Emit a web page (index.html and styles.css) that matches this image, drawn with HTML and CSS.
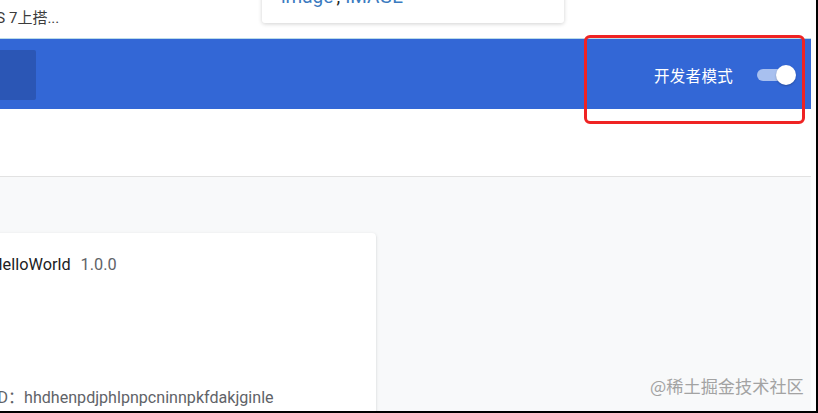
FILE: index.html
```html
<!DOCTYPE html>
<html lang="zh">
<head>
<meta charset="utf-8">
<title>扩展程序</title>
<link rel="stylesheet" href="styles.css">
</head>
<body>
<div class="frame">
  <div class="page">
    <div class="topbar"><span class="crumb">OS 7上搭...</span></div>
    <header class="toolbar">
      <div class="menu-box"></div>
      <div class="dev-mode">
        <span class="dev-label">开发者模式</span>
        <span class="toggle"><span class="knob"></span></span>
      </div>
    </header>
    <div class="subbar"></div>
    <main class="content">
      <section class="card">
        <div class="card-title"><span class="name">HelloWorld</span><span class="version">1.0.0</span></div>
        <div class="card-id">ID：hhdhenpdjphlpnpcninnpkfdakjginle</div>
      </section>
    </main>
  </div>
  <div class="strip"></div>

  <div class="popover"><a class="link">image</a><span class="comma">,</span><a class="link">IMAGE</a></div>
  <div class="highlight"></div>
  <div class="watermark">@稀土掘金技术社区</div>
</div>
</body>
</html>
```

FILE: styles.css
```css
html, body {
  margin: 0;
  padding: 0;
  background: #000;
  width: 818px;
  height: 413px;
  overflow: hidden;
}

.frame {
  position: relative;
  width: 816px;
  height: 411px;
  overflow: hidden;
  background: #fff;
  display: flex;
  font-family: Roboto, "Noto Sans CJK SC", sans-serif;
}

.page {
  width: 811px;
  display: flex;
  flex-direction: column;
}

.strip {
  width: 5px;
  background: #fdfdfd;
}

.topbar {
  height: 38px;
  border-bottom: 1px solid #b9dbe8;
  display: flex;
  align-items: center;
  flex-shrink: 0;
}

.crumb {
  margin-left: -14px;
  font-size: 15px;
  color: #3c3c3c;
  margin-top: -5px;
}

.toolbar {
  height: 70px;
  background: #3367d6;
  display: flex;
  align-items: center;
  justify-content: space-between;
  flex-shrink: 0;
}

.menu-box {
  width: 36px;
  height: 50px;
  background: #2b56b5;
  border-radius: 0 2px 2px 0;
  margin-top: 1px;
}

.dev-mode {
  display: flex;
  align-items: center;
  padding-right: 15px;
  margin-top: 1px;
}

.dev-label {
  font-family: "Noto Sans CJK SC", sans-serif;
  font-size: 15.5px;
  color: #fff;
  margin-right: 24px;
  letter-spacing: 0.3px;
}

.toggle {
  position: relative;
  width: 32px;
  height: 12px;
  border-radius: 6px;
  background: #a8c0ef;
  margin-right: 7px;
}

.knob {
  position: absolute;
  right: -7px;
  top: -4px;
  width: 20px;
  height: 20px;
  border-radius: 50%;
  background: #fff;
  box-shadow: 0 1px 2px rgba(0, 0, 0, 0.25);
}

.subbar {
  height: 67px;
  border-bottom: 1px solid #e2e2e2;
  flex-shrink: 0;
}

.content {
  flex: 1;
  background: #f8f9fa;
  padding-top: 56px;
}

.card {
  margin-left: -24px;
  width: 400px;
  height: 200px;
  background: #fff;
  border-radius: 4px;
  box-shadow: 0 1px 2px rgba(60, 64, 67, 0.18), 0 1px 4px rgba(60, 64, 67, 0.08);
  padding: 22px 0 0 15px;
  box-sizing: border-box;
}

.card-title {
  font-size: 16.3px;
  line-height: 20px;
  color: #202124;
}

.version {
  color: #5f6368;
  margin-left: 10px;
}

.card-id {
  margin-top: 113px;
  font-size: 16.1px;
  line-height: 20px;
  color: #5f6368;
  margin-left: 2px;
}

.popover {
  position: absolute;
  left: 262px;
  top: -22px;
  width: 302px;
  height: 45px;
  background: #fff;
  border-radius: 3px;
  box-shadow: 0 1px 4px rgba(0, 0, 0, 0.18);
  font-size: 19px;
  line-height: 20px;
  padding: 9px 0 0 19px;
  box-sizing: border-box;
}

.link {
  color: #3b7bbf;
}

.comma {
  color: #222;
  margin: 0 5px 0 3px;
}

.highlight {
  position: absolute;
  left: 584px;
  top: 35px;
  width: 221px;
  height: 89px;
  border: 3px solid #ef2323;
  border-radius: 6px;
  box-sizing: border-box;
}

.watermark {
  position: absolute;
  left: 650px;
  top: 374px;
  font-family: "Noto Sans CJK SC", sans-serif;
  font-size: 17.2px;
  line-height: 24px;
  color: #a3a3a3;
}
```
